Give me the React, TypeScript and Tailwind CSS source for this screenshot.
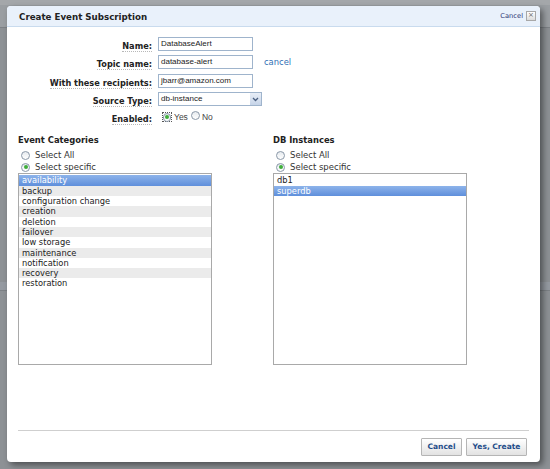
import React from "react";

const categories = [
  "availability",
  "backup",
  "configuration change",
  "creation",
  "deletion",
  "failover",
  "low storage",
  "maintenance",
  "notification",
  "recovery",
  "restoration",
];

const instances = ["db1", "superdb"];

const verdana = { fontFamily: '"DejaVu Sans", Verdana, sans-serif' };
const arial = { fontFamily: '"Liberation Sans", Arial, sans-serif' };

function Radio({ checked }: { checked?: boolean }) {
  return (
    <span className="inline-flex h-[9px] w-[9px] items-center justify-center rounded-full border border-[#8a98a8] bg-gradient-to-b from-[#e6eaee] to-white">
      {checked && <span className="h-[4px] w-[4px] rounded-full bg-[#3fae3a]" />}
    </span>
  );
}

function Field({ label, children }: { label: string; children: React.ReactNode }) {
  return (
    <div className="flex h-[18.3px] items-center">
      <div className="w-[140px] text-right pr-[6px]">
        <span className="border-b border-dotted border-[#b8b8b8] text-[8.2px] font-bold text-[#222]">
          {label}
        </span>
      </div>
      {children}
    </div>
  );
}

function TextBox({ value }: { value: string }) {
  return (
    <div
      className="flex h-[14px] w-[95px] items-center border border-[#9fb4cc] bg-white px-[2px] text-[8px] text-[#222]"
      style={arial}
    >
      {value}
    </div>
  );
}

function ListBox({
  items,
  selected,
  striped,
}: {
  items: string[];
  selected: number;
  striped?: boolean;
}) {
  return (
    <div className="h-[192px] w-[194px] border border-[#a9a9a9] bg-white pt-[1px]">
      {items.map((item, i) => (
        <div
          key={item}
          className={
            "h-[10.3px] px-[3px] text-[8.3px] leading-[10.3px] " +
            (i === selected
              ? "bg-gradient-to-b from-[#8db3ea] to-[#5f8fdb] text-white"
              : striped && i % 2 === 1
              ? "bg-[#ebebeb] text-[#222]"
              : "text-[#222]")
          }
        >
          {item}
        </div>
      ))}
    </div>
  );
}

function Section({
  title,
  items,
  selected,
  striped,
}: {
  title: string;
  items: string[];
  selected: number;
  striped?: boolean;
}) {
  return (
    <div className="flex flex-col">
      <div className="h-[14px] text-[8.4px] font-bold leading-[14px] text-[#222]">{title}</div>
      <div className="mt-[2px] flex h-[12px] items-center gap-[5px] pl-[3px] text-[8.5px] text-[#333]">
        <Radio />
        Select All
      </div>
      <div className="flex h-[12px] items-center gap-[5px] pl-[3px] text-[8.5px] text-[#333]">
        <Radio checked />
        Select specific
      </div>
      <ListBox items={items} selected={selected} striped={striped} />
    </div>
  );
}

function Button({ label, width }: { label: string; width: string }) {
  return (
    <button
      className={
        "h-[18px] rounded-[1px] border border-[#b5b5b5] bg-gradient-to-b from-white to-[#e2e2e2] text-[7.5px] font-bold text-[#1f4d8a] " +
        width
      }
    >
      {label}
    </button>
  );
}

export default function App() {
  return (
    <div className="relative h-[469px] w-[550px] overflow-hidden bg-[#8d9195]" style={verdana}>
      {/* dimmed page behind the dialog */}
      <div className="h-[5px] bg-[#a4a7aa]" />
      <div className="h-[22px] bg-[#9a9ea2]" />
      <div className="h-[1px] bg-[#7c8085]" />
      <div className="h-[254px]" />
      <div className="h-[8px] bg-[#959aa1]" />
      <div className="h-[1px] bg-[#7c8085]" />

      {/* dialog */}
      <div className="absolute left-[7px] top-[6px] flex h-[456px] w-[533px] flex-col overflow-hidden rounded-[4px] bg-white shadow-[3px_3px_6px_rgba(0,0,0,0.45)]">
        <div className="flex h-[21px] items-center justify-between border-b border-[#c9dbee] bg-[#e9f1fb] pl-[12px] pr-[4px]">
          <span className="pt-[3px] text-[8.7px] font-bold text-[#222]">Create Event Subscription</span>
          <div className="flex items-center gap-[3px]">
            <span className="text-[6.7px] text-[#2e3475]">Cancel</span>
            <span className="flex h-[10px] w-[10px] items-center justify-center border border-[#a8a8a8] bg-gradient-to-b from-white to-[#dcdcdc] text-[7px] leading-none text-[#666]">
              ×
            </span>
          </div>
        </div>

        <div className="flex flex-1 flex-col px-[11px]">
          <div className="mt-[8px] flex flex-col">
            <Field label="Name:">
              <TextBox value="DatabaseAlert" />
            </Field>
            <Field label="Topic name:">
              <TextBox value="database-alert" />
              <span className="ml-[11px] text-[8.4px] text-[#2f6fb5]">cancel</span>
            </Field>
            <Field label="With these recipients:">
              <TextBox value="jbarr@amazon.com" />
            </Field>
            <Field label="Source Type:">
              <div
                className="flex h-[14px] w-[104px] items-center justify-between border border-[#9fb4cc] bg-white pl-[2px] text-[8px] text-[#222]"
                style={arial}
              >
                db-instance
                <span className="flex h-[12px] w-[11px] items-center justify-center bg-gradient-to-b from-[#e8eef7] to-[#c6d4e8]">
                  <svg width="7" height="5" viewBox="0 0 7 5">
                    <path d="M1 1 L3.5 3.5 L6 1" stroke="#4a5f80" strokeWidth="1.3" fill="none" />
                  </svg>
                </span>
              </div>
            </Field>
            <Field label="Enabled:">
              <div className="ml-[4px] flex items-center text-[8.5px] text-[#444]" style={arial}>
                <span className="mr-[2px] flex h-[10px] w-[10px] items-center justify-center border border-dotted border-[#555]">
                  <Radio checked />
                </span>
                Yes
                <span className="ml-[3px] mr-[2px]">
                  <Radio />
                </span>
                No
              </div>
            </Field>
          </div>

          <div className="mt-[7px] flex gap-[61px]">
            <Section title="Event Categories" items={categories} selected={0} striped />
            <Section title="DB Instances" items={instances} selected={1} />
          </div>

          <div className="mt-auto mb-[6px] flex flex-col">
            <div className="h-px bg-[#cfcfcf]" />
            <div className="mt-[7px] flex justify-end gap-[4px] pr-[2px]">
              <Button label="Cancel" width="w-[41px]" />
              <Button label="Yes, Create" width="w-[61px]" />
            </div>
          </div>
        </div>
      </div>
    </div>
  );
}
